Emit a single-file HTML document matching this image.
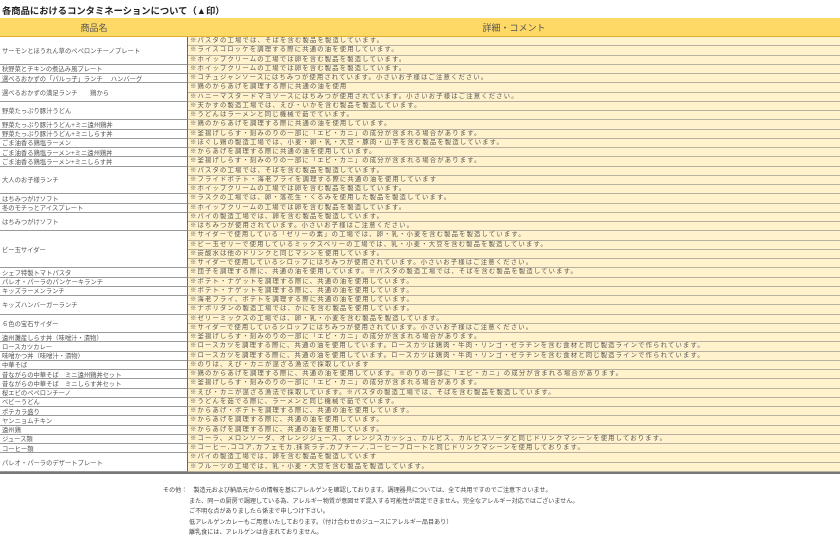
<!DOCTYPE html>
<html><head><meta charset="utf-8"><style>
*{margin:0;padding:0;box-sizing:border-box}
body{width:840px;height:536px;background:#fff;font-family:"Liberation Sans","Noto Sans CJK JP",sans-serif;color:#444;overflow:hidden;position:relative}
.title{position:absolute;left:2px;top:3px;font-size:9.3px;font-weight:bold;color:#222;white-space:nowrap}
.hd{position:absolute;top:18px;height:19px;background:#ffd966;border-bottom:1px solid #e0b030;font-size:9px;color:#555;display:flex;align-items:center;justify-content:center}
.grid{position:absolute;left:0;top:37px;width:840px;display:grid;grid-template-columns:188px 652px;grid-template-rows:repeat(47,9.26px);grid-auto-flow:column;border-bottom:2px solid #777}
.l{grid-column:1;border-bottom:1px solid #999;font-size:6.3px;display:flex;align-items:center;padding-left:2px;white-space:nowrap;overflow:hidden;color:#555;border-right:1px solid #666}
.r{grid-column:2;background:#fff2cc;border-bottom:1px solid #b8b0a0;font-size:6.3px;line-height:8px;padding-left:2px;white-space:nowrap;overflow:hidden;color:#555;letter-spacing:1.2px}
.s2{grid-row:span 2}.s3{grid-row:span 3}.s4{grid-row:span 4}
.notes{position:absolute;left:163px;top:486px;font-size:6.1px;color:#444;line-height:10.5px}
.notes div{white-space:nowrap}
</style></head><body>
<div class="title">各商品におけるコンタミネーションについて（▲印）</div>
<div class="hd" style="left:0;width:188px">商品名</div>
<div class="hd" style="left:188px;width:652px">詳細・コメント</div>
<div class="grid">
<div class="l s3">サーモンとほうれん草のペペロンチーノプレート</div>
<div class="l">秋野菜とチキンの煮込み風プレート</div>
<div class="l">選べるおかずの「パルっ子」ランチ　 ハンバーグ</div>
<div class="l s2">選べるおかずの満足ランチ　　鶏から</div>
<div class="l s2">野菜たっぷり豚汁うどん</div>
<div class="l">野菜たっぷり豚汁うどん+ミニ遠州鶏丼</div>
<div class="l">野菜たっぷり豚汁うどん+ミニしらす丼</div>
<div class="l">ごま油香る鶏塩ラーメン</div>
<div class="l">ごま油香る鶏塩ラーメン+ミニ遠州鶏丼</div>
<div class="l">ごま油香る鶏塩ラーメン+ミニしらす丼</div>
<div class="l s3">大人のお子様ランチ</div>
<div class="l">はちみつがけソフト</div>
<div class="l">冬のモチっとアイスプレート</div>
<div class="l s2">はちみつがけソフト</div>
<div class="l s4">ビー玉サイダー</div>
<div class="l">シェフ特製トマトパスタ</div>
<div class="l">パレオ・パーラのパンケーキランチ</div>
<div class="l">キッズラーメンランチ</div>
<div class="l s2">キッズハンバーガーランチ</div>
<div class="l s2">６色の宝石サイダー</div>
<div class="l">遠州灘産しらす丼（味噌汁・漬物）</div>
<div class="l">ロースカツカレー</div>
<div class="l">味噌かつ丼（味噌汁・漬物）</div>
<div class="l">中華そば</div>
<div class="l">昔ながらの中華そば　ミニ遠州鶏丼セット</div>
<div class="l">昔ながらの中華そば　ミニしらす丼セット</div>
<div class="l">桜エビのペペロンチーノ</div>
<div class="l">ベビーうどん</div>
<div class="l">ポテカラ盛り</div>
<div class="l">ヤンニョムチキン</div>
<div class="l">遠州鶏</div>
<div class="l">ジュース類</div>
<div class="l">コーヒー類</div>
<div class="l s2">パレオ・パーラのデザートプレート</div>

<div class="r">※パスタの工場では、そばを含む製品を製造しています。</div>
<div class="r">※ライスコロッケを調理する際に共通の油を使用しています。</div>
<div class="r">※ホイップクリームの工場では卵を含む製品を製造しています。</div>
<div class="r">※ホイップクリームの工場では卵を含む製品を製造しています。</div>
<div class="r">※コチュジャンソースにはちみつが使用されています。小さいお子様はご注意ください。</div>
<div class="r">※鶏のからあげを調理する際に共通の油を使用</div>
<div class="r">※ハニーマスタードマヨソースにはちみつが使用されています。小さいお子様はご注意ください。</div>
<div class="r">※天かすの製造工場では、えび・いかを含む製品を製造しています。</div>
<div class="r">※うどんはラーメンと同じ機械で茹でています。</div>
<div class="r">※鶏のからあげを調理する際に共通の油を使用しています。</div>
<div class="r">※釜揚げしらす・刻みのりの一部に「エビ・カニ」の成分が含まれる場合があります。</div>
<div class="r">※ほぐし鶏の製造工場では、小麦・卵・乳・大豆・豚肉・山芋を含む製品を製造しています。</div>
<div class="r">※からあげを調理する際に共通の油を使用しています。</div>
<div class="r">※釜揚げしらす・刻みのりの一部に「エビ・カニ」の成分が含まれる場合があります。</div>
<div class="r">※パスタの工場では、そばを含む製品を製造しています。</div>
<div class="r">※フライドポテト・海老フライを調理する際に共通の油を使用しています</div>
<div class="r">※ホイップクリームの工場では卵を含む製品を製造しています。</div>
<div class="r">※ラスクの工場では、卵・落花生・くるみを使用した製品を製造しています。</div>
<div class="r">※ホイップクリームの工場では卵を含む製品を製造しています。</div>
<div class="r">※パイの製造工場では、卵を含む製品を製造しています。</div>
<div class="r">※はちみつが使用されています。小さいお子様はご注意ください。</div>
<div class="r">※サイダーで使用している「ゼリーの素」の工場では、卵・乳・小麦を含む製品を製造しています。</div>
<div class="r">※ビー玉ゼリーで使用しているミックスベリーの工場では、乳・小麦・大豆を含む製品を製造しています。</div>
<div class="r">※炭酸水は他のドリンクと同じマシンを使用しています。</div>
<div class="r">※サイダーで使用しているシロップにはちみつが使用されています。小さいお子様はご注意ください。</div>
<div class="r">※団子を調理する際に、共通の油を使用しています。※パスタの製造工場では、そばを含む製品を製造しています。</div>
<div class="r">※ポテト・ナゲットを調理する際に、共通の油を使用しています。</div>
<div class="r">※ポテト・ナゲットを調理する際に、共通の油を使用しています。</div>
<div class="r">※海老フライ、ポテトを調理する際に共通の油を使用しています。</div>
<div class="r">※ナポリタンの製造工場では、かにを含む製品を使用しています。</div>
<div class="r">※ゼリーミックスの工場では、卵・乳・小麦を含む製品を製造しています。</div>
<div class="r">※サイダーで使用しているシロップにはちみつが使用されています。小さいお子様はご注意ください。</div>
<div class="r">※釜揚げしらす・刻みのりの一部に「エビ・カニ」の成分が含まれる場合があります。</div>
<div class="r">※ロースカツを調理する際に、共通の油を使用しています。ロースカツは鶏肉・牛肉・リンゴ・ゼラチンを含む食材と同じ製造ラインで作られています。</div>
<div class="r">※ロースカツを調理する際に、共通の油を使用しています。ロースカツは鶏肉・牛肉・リンゴ・ゼラチンを含む食材と同じ製造ラインで作られています。</div>
<div class="r">※のりは、えび・カニが混ざる漁法で採取しています</div>
<div class="r">※鶏のからあげを調理する際に、共通の油を使用しています。※のりの一部に「エビ・カニ」の成分が含まれる場合があります。</div>
<div class="r">※釜揚げしらす・刻みのりの一部に「エビ・カニ」の成分が含まれる場合があります。</div>
<div class="r">※えび・カニが混ざる漁法で採取しています。※パスタの製造工場では、そばを含む製品を製造しています。</div>
<div class="r">※うどんを茹でる際に、ラーメンと同じ機械で茹でています。</div>
<div class="r">※からあげ・ポテトを調理する際に、共通の油を使用しています。</div>
<div class="r">※からあげを調理する際に、共通の油を使用しています。</div>
<div class="r">※からあげを調理する際に、共通の油を使用しています。</div>
<div class="r">※コーラ、メロンソーダ、オレンジジュース、オレンジスカッシュ、カルピス、カルピスソーダと同じドリンクマシーンを使用しております。</div>
<div class="r">※コーヒー,ココア,カフェモカ,抹茶ラテ,カプチーノ,コーヒーフロートと同じドリンクマシーンを使用しております。</div>
<div class="r">※パイの製造工場では、卵を含む製品を製造しています</div>
<div class="r">※フルーツの工場では、乳・小麦・大豆を含む製品を製造しています。</div>
</div>
<div class="notes">
<div>その他：　製造元および納品元からの情報を基にアレルゲンを確認しております。調理器具については、全て共用ですのでご注意下さいませ。</div>
<div style="padding-left:26px">また、同一の厨房で調理している為、アレルギー物質が意図せず混入する可能性が否定できません。完全なアレルギー対応ではございません。</div>
<div style="padding-left:26px">ご不明な点がありましたら係まで申しつけ下さい。</div>
<div style="padding-left:26px">低アレルゲンカレーもご用意いたしております。（付け合わせのジュースにアレルギー品目あり）</div>
<div style="padding-left:26px">離乳食には、アレルゲンは含まれておりません。</div>
</div>
</body></html>
